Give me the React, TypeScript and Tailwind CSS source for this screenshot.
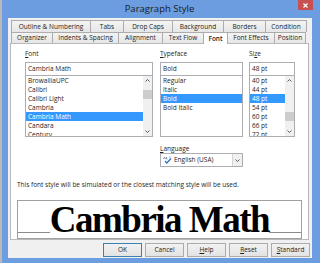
import React from 'react';

const tabsBack = [
  { label: 'Outline & Numbering', w: 'w-[79px]' },
  { label: 'Tabs', w: 'w-[33px]' },
  { label: 'Drop Caps', w: 'w-[49px]' },
  { label: 'Background', w: 'w-[51px]' },
  { label: 'Borders', w: 'w-[42px]' },
  { label: 'Condition', w: 'w-[42px]' },
];

const tabsFront = [
  { label: 'Organizer', w: 'w-[41px]' },
  { label: 'Indents & Spacing', w: 'w-[66px]' },
  { label: 'Alignment', w: 'w-[44px]' },
  { label: 'Text Flow', w: 'w-[41px]' },
  { label: 'Font', w: 'w-[25px]', active: true },
  { label: 'Font Effects', w: 'w-[47px]' },
  { label: 'Position', w: 'w-[32px]' },
];

const fonts = ['BrowalliaUPC', 'Calibri', 'Calibri Light', 'Cambria', 'Cambria Math', 'Candara', 'Century'];
const faces = ['Regular', 'Italic', 'Bold', 'Bold Italic'];
const sizes = ['40 pt', '44 pt', '48 pt', '54 pt', '60 pt', '66 pt', '72 pt'];

const Chevron = ({ up }: { up?: boolean }) => (
  <svg width="5" height="3" viewBox="0 0 5 3" className="block">
    <path d={up ? 'M0.5 2.5 L2.5 0.5 L4.5 2.5' : 'M0.5 0.5 L2.5 2.5 L4.5 0.5'} fill="none" stroke="#4a4a4a" strokeWidth="0.9" />
  </svg>
);

const ScrollBar = ({ thumb }: { thumb: string }) => (
  <div className="w-[9px] h-full bg-[#f0f0f0] flex flex-col">
    <div className="h-[9px] flex items-center justify-center">
      <Chevron up />
    </div>
    <div className="flex-1">
      <div className={`h-[9px] bg-[#cdcdcd] ${thumb}`} />
    </div>
    <div className="h-[9px] flex items-center justify-center">
      <Chevron />
    </div>
  </div>
);

const ListBox = ({ items, selected, thumb }: { items: string[]; selected: string; thumb?: string }) => (
  <div className="h-[62px] bg-white border border-[#abadb3] flex overflow-hidden">
    <div className="flex-1 flex flex-col">
      {items.map((it) => (
        <div
          key={it}
          className={`h-[9px] leading-[9px] pl-[2px] whitespace-nowrap ${it === selected ? 'bg-[#3399ff] text-white' : ''}`}
        >
          {it}
        </div>
      ))}
    </div>
    {thumb && <ScrollBar thumb={thumb} />}
  </div>
);

const Field = ({ value }: { value: string }) => (
  <div className="h-[13px] bg-white border border-[#abadb3] border-b-0 leading-[12px] pl-[2px]">{value}</div>
);

const Label = ({ pre, u, post }: { pre: string; u: string; post: string }) => (
  <div className="h-[9px] leading-[9px]">
    {pre}
    <span className="underline">{u}</span>
    {post}
  </div>
);

const Button = ({ children, primary }: { children: React.ReactNode; primary?: boolean }) => (
  <div
    className={`w-[39px] h-[14px] flex items-center justify-center border bg-gradient-to-b from-[#f2f2f2] to-[#e3e3e3] ${
      primary ? 'border-[#3c7fb1]' : 'border-[#acacac]'
    }`}
  >
    {children}
  </div>
);

export default function App() {
  return (
    <div className="w-[320px] h-[263px] bg-[#b9b9b9] pl-[2px] overflow-hidden font-['Open_Sans','Liberation_Sans',sans-serif] text-[6.5px] text-[#1e1e1e]">
      <div className="w-[318px] h-[263px] bg-[#6b9de0] flex flex-col">
        {/* title bar */}
        <div className="h-[18px] relative flex items-center justify-center pr-[3px]">
          <span className="text-[9.5px] text-[#1a1a1a]">Paragraph Style</span>
          <div className="absolute right-[7px] top-0 w-[15px] h-[10px] bg-[#c75050] flex items-center justify-center">
            <svg width="5" height="5" viewBox="0 0 5 5">
              <path d="M0.5 0.5 L4.5 4.5 M4.5 0.5 L0.5 4.5" stroke="white" strokeWidth="1.2" />
            </svg>
          </div>
        </div>

        <div className="ml-[6px] w-[304px] h-[240px] bg-[#f0f0f0] flex flex-col pt-[2px] pl-[2px]">
          {/* tabs */}
          <div className="flex h-[12px] ml-[1px]">
            {tabsBack.map((t, i) => (
              <div
                key={t.label}
                className={`${t.w} h-[12px] border-t border-l border-[#acacac] bg-gradient-to-b from-[#f4f4f4] to-[#e6e6e6] flex items-center justify-center whitespace-nowrap ${
                  i === tabsBack.length - 1 ? 'border-r' : ''
                }`}
              >
                {t.label}
              </div>
            ))}
          </div>
          <div className="flex h-[11px] ml-[1px] items-start">
            {tabsFront.map((t, i) => (
              <div
                key={t.label}
                className={`${t.w} border-t border-l border-[#acacac] flex items-center justify-center whitespace-nowrap ${
                  i === tabsFront.length - 1 ? 'border-r' : ''
                } ${
                  t.active
                    ? 'h-[12px] bg-white font-semibold relative z-10 border-r -mr-px'
                    : 'h-[11px] bg-gradient-to-b from-[#f4f4f4] to-[#e6e6e6]'
                }`}
              >
                {t.label}
              </div>
            ))}
          </div>

          {/* panel */}
          <div className="w-[299px] h-[197px] bg-white border border-[#b9b9b9] pt-[5px] flex flex-col">
            <div className="flex items-start pl-[14px]">
              <div className="w-[128px] flex flex-col">
                <Label pre="" u="F" post="ont" />
                <div className="mt-[4px]">
                  <Field value="Cambria Math" />
                  <ListBox items={fonts} selected="Cambria Math" thumb="mt-[5px]" />
                </div>
              </div>

              <div className="w-[83px] ml-[7px] flex flex-col">
                <Label pre="" u="T" post="ypeface" />
                <div className="mt-[4px]">
                  <Field value="Bold" />
                  <ListBox items={faces} selected="Bold" />
                </div>
                <div className="mt-[7px]">
                  <Label pre="" u="L" post="anguage" />
                </div>
                <div className="h-[14px] bg-white border border-[#abadb3] flex items-center">
                  <svg width="9" height="8" viewBox="0 0 9 8" className="ml-[2px]">
                    <path d="M0.5 3 L1.5 1 L2.5 3 M3.5 1 L3.5 3 L4.5 3 M6 1 L7.5 1" stroke="#5f7fa5" strokeWidth="0.8" fill="none" />
                    <path d="M2 5 L3.8 7 L8 2.5" stroke="#2f6fbd" strokeWidth="1.2" fill="none" />
                  </svg>
                  <span className="ml-[2px] flex-1">English (USA)</span>
                  <div className="w-[10px] h-full border-l border-[#d4d4d4] bg-[#f0f0f0] flex items-center justify-center">
                    <Chevron />
                  </div>
                </div>
              </div>

              <div className="w-[46px] ml-[6px] flex flex-col">
                <Label pre="Si" u="z" post="e" />
                <div className="mt-[4px]">
                  <Field value="48 pt" />
                  <ListBox items={sizes} selected="48 pt" thumb="mt-[27px]" />
                </div>
              </div>
            </div>

            <div className="mt-[13px] ml-[6px] h-[9px] leading-[9px]">
              This font style will be simulated or the closest matching style will be used.
            </div>

            <div className="mt-[11px] ml-[6px] w-[285px] h-[39px] border border-[#a0a0a0] flex">
              <div className="flex-1 h-[32px] border-b border-[#8c8c8c]" />
              <span className="font-['Liberation_Serif',serif] font-bold text-[37px] leading-[37px] tracking-[-1.5px] text-black whitespace-nowrap">
                Cambria Math
              </span>
              <div className="flex-1 h-[32px] border-b border-[#8c8c8c]" />
            </div>
          </div>

          {/* buttons */}
          <div className="mt-[3px] flex justify-end gap-[3px] pr-[2px]">
            <Button primary>OK</Button>
            <Button>Cancel</Button>
            <Button>
              <span>
                <span className="underline">H</span>elp
              </span>
            </Button>
            <Button>
              <span>
                <span className="underline">R</span>eset
              </span>
            </Button>
            <Button>
              <span>
                <span className="underline">S</span>tandard
              </span>
            </Button>
          </div>
        </div>
      </div>
    </div>
  );
}
